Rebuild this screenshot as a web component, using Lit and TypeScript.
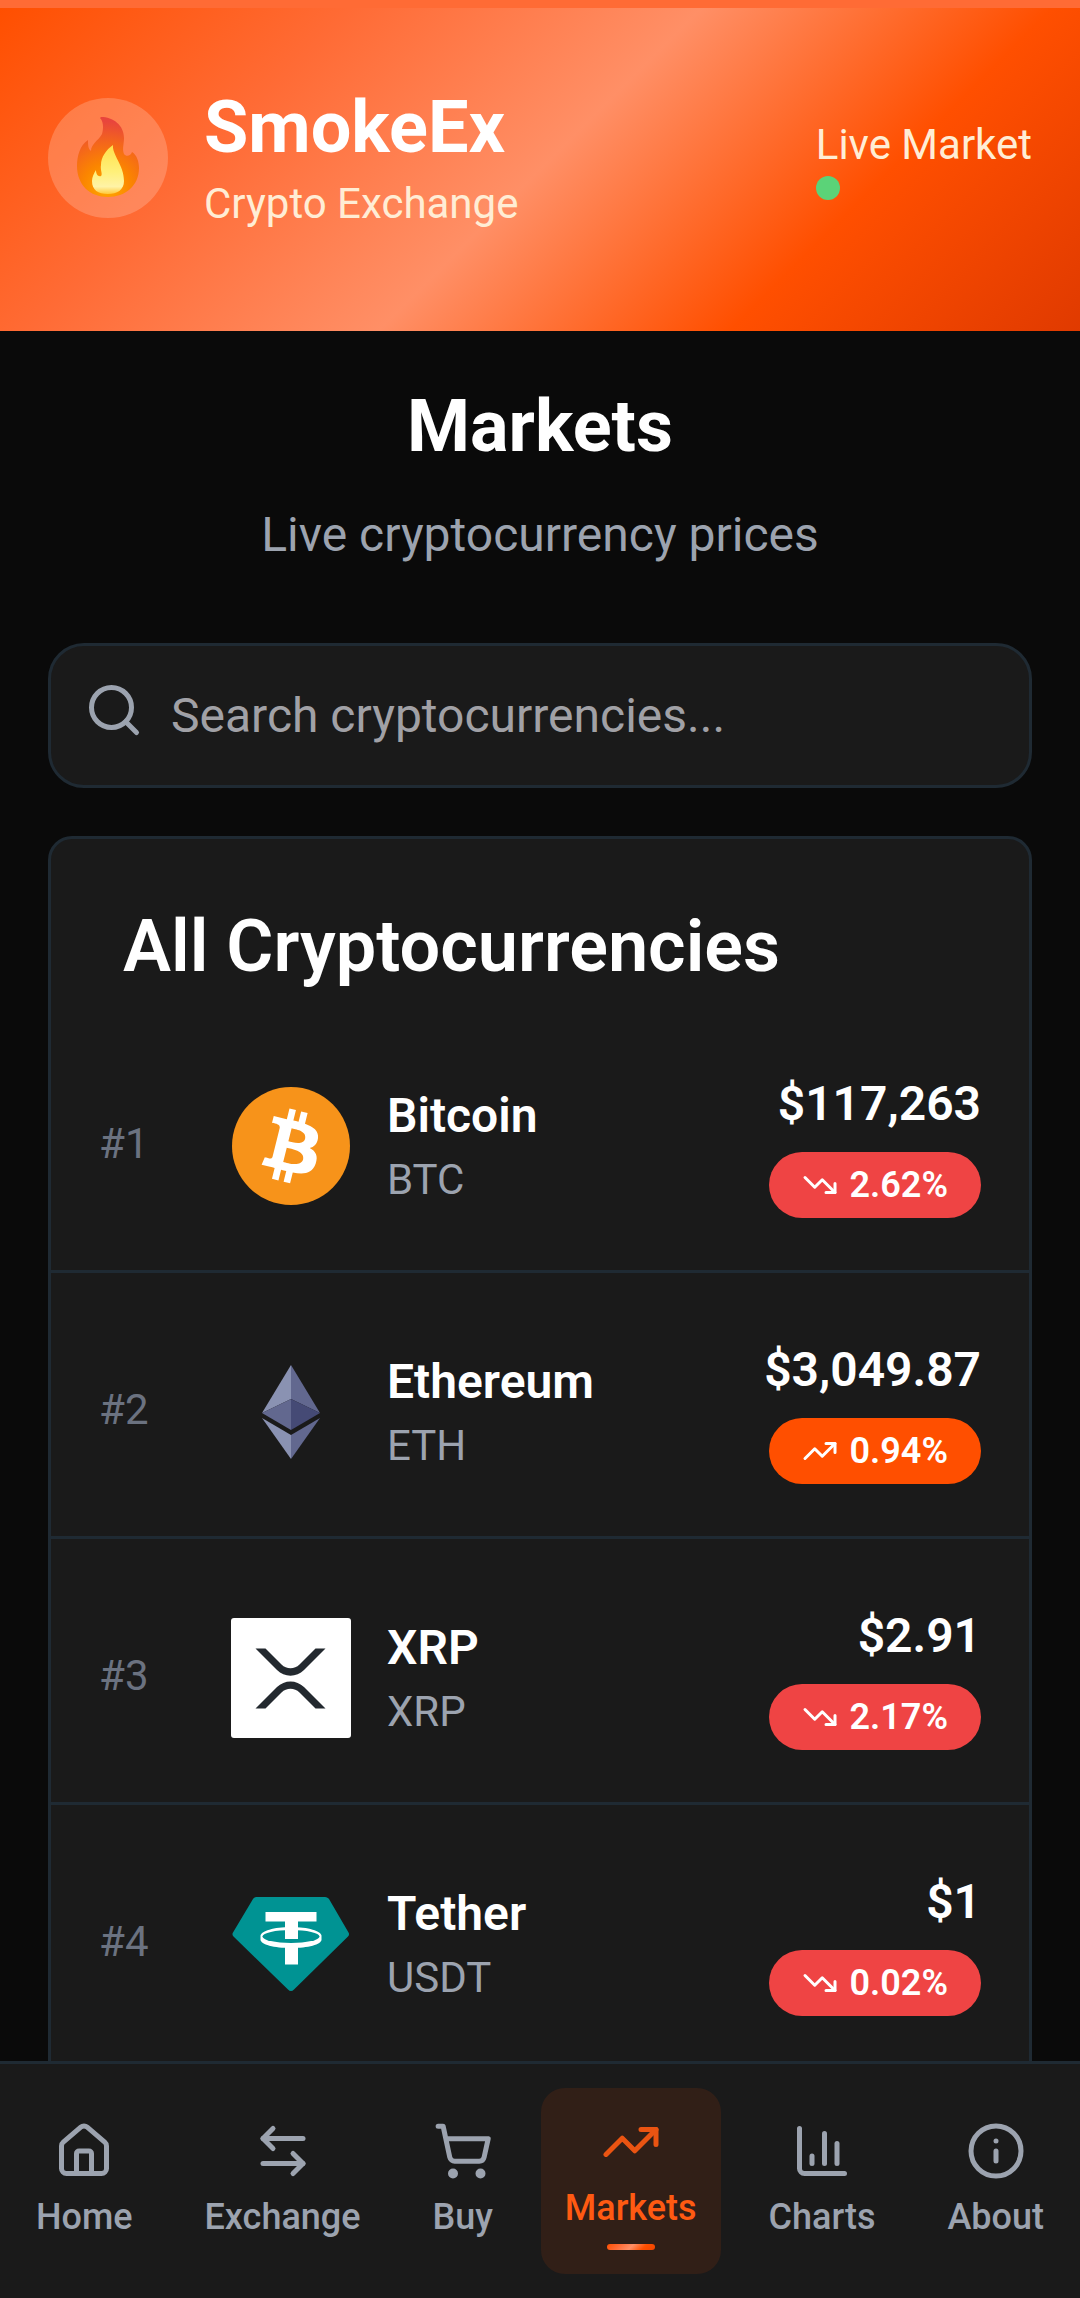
import { LitElement, html, css, svg, nothing } from "lit";
import type { SVGTemplateResult } from "lit";
import { customElement, property, state } from "lit/decorators.js";
import { classMap } from "lit/directives/class-map.js";

interface Coin {
  rank: number;
  name: string;
  symbol: string;
  price: string;
  change: number;
  logo: SVGTemplateResult;
}

interface Tab {
  id: string;
  label: string;
  icon: SVGTemplateResult;
}

const trendUp = svg`<path d="M16 7h6v6"/><path d="m22 7-8.5 8.5-5-5L2 17"/>`;
const trendDown = svg`<path d="M16 17h6v-6"/><path d="m22 17-8.5-8.5-5 5L2 7"/>`;

const bitcoinLogo = svg`
  <circle cx="60" cy="60" r="59" fill="#f7931a"/>
  <path transform="scale(3.75)" fill="#fff" d="M23.189 14.02c.314-2.096-1.283-3.223-3.465-3.975l.708-2.84-1.728-.43-.69 2.765c-.454-.114-.92-.22-1.385-.326l.695-2.783L15.596 6l-.708 2.839c-.376-.086-.746-.17-1.104-.26l.002-.009-2.384-.595-.46 1.846s1.283.294 1.256.312c.7.175.826.638.805 1.006l-.806 3.235c.048.012.11.03.18.057l-.183-.045-1.13 4.532c-.086.212-.303.531-.793.41.018.025-1.256-.313-1.256-.313l-.858 1.978 2.25.561c.418.105.828.215 1.231.318l-.715 2.872 1.727.43.708-2.84c.472.127.93.245 1.378.357l-.706 2.828 1.728.43.715-2.866c2.948.558 5.164.333 6.097-2.333.752-2.146-.037-3.385-1.588-4.192 1.13-.26 1.98-1.003 2.207-2.538zm-3.95 5.538c-.533 2.147-4.148.986-5.32.695l.95-3.805c1.172.293 4.929.872 4.37 3.11zm.535-5.569c-.487 1.953-3.495.96-4.47.717l.86-3.45c.975.243 4.118.696 3.61 2.733z"/>`;

const ethereumLogo = svg`
  <path fill="#8a92b2" d="M60 13 31 61l29-14z"/>
  <path fill="#62688f" d="M60 13v34l29 14z"/>
  <path fill="#62688f" d="M60 47 31 61l29 17z"/>
  <path fill="#454a75" d="M60 47v31l29-17z"/>
  <path fill="#8a92b2" d="m31 66 29 17v24z"/>
  <path fill="#62688f" d="M89 66 60 83v24z"/>`;

const xrpLogo = svg`
  <rect width="120" height="120" rx="3" fill="#fff"/>
  <path fill="#23292f" d="M24.5 30.5h10l16 16c5 5 13 5 18 0l16-16h10L73 52c-7.500 7.500-19.500 7.500-27 0z"/>
  <path fill="#23292f" d="M24.500 90.500h10l16-16c5-5 13-5 18 0l16 16h10L73 69c-7.500-7.500-19.500-7.500-27 0z"/>`;

const tetherLogo = svg`
  <path fill="#009393" d="M26 13h68c2 0 3 1 4 2l19.500 33.500c1 1.500 .5 3-.500 4L63 105.500c-2 2-4 2-6 0L2.500 52.500c-1-1-1.500-2.500-.500-4L22 15c1-1 2-2 4-2z"/>
  <path fill="#fff" d="M29.500 52c0-5 13.500-9 30.500-9s30.500 4 30.500 9v3.500c0 5-13.500 8.500-30.500 8.500s-30.500-3.500-30.500-8.500z"/>
  <ellipse cx="60" cy="52.500" rx="28.500" ry="6.500" fill="#009393"/>
  <path fill="#fff" d="M34.500 28h51v9.500H67V55H54V37.500H34.500zM54 62h13v18.500H54z"/>`;

const coins: Coin[] = [
  { rank: 1, name: "Bitcoin", symbol: "BTC", price: "$117,263", change: -2.62, logo: bitcoinLogo },
  { rank: 2, name: "Ethereum", symbol: "ETH", price: "$3,049.87", change: 0.94, logo: ethereumLogo },
  { rank: 3, name: "XRP", symbol: "XRP", price: "$2.91", change: -2.17, logo: xrpLogo },
  { rank: 4, name: "Tether", symbol: "USDT", price: "$1", change: -0.02, logo: tetherLogo },
];

const tabs: Tab[] = [
  {
    id: "home",
    label: "Home",
    icon: svg`<path d="M15 21v-8a1 1 0 0 0-1-1h-4a1 1 0 0 0-1 1v8"/><path d="M3 10a2 2 0 0 1 .709-1.528l7-6a2 2 0 0 1 2.582 0l7 6A2 2 0 0 1 21 10v9a2 2 0 0 1-2 2H5a2 2 0 0 1-2-2z"/>`,
  },
  {
    id: "exchange",
    label: "Exchange",
    icon: svg`<path d="M8 3 4 7l4 4"/><path d="M4 7h16"/><path d="m16 21 4-4-4-4"/><path d="M20 17H4"/>`,
  },
  {
    id: "buy",
    label: "Buy",
    icon: svg`<circle cx="8" cy="21" r="1"/><circle cx="19" cy="21" r="1"/><path d="M2.050 2.050h2l2.660 12.420a2 2 0 0 0 2 1.580h9.780a2 2 0 0 0 1.950-1.570l1.650-7.430H5.120"/>`,
  },
  { id: "markets", label: "Markets", icon: trendUp },
  {
    id: "charts",
    label: "Charts",
    icon: svg`<path d="M3 3v16a2 2 0 0 0 2 2h16"/><path d="M18 17V9"/><path d="M13 17V5"/><path d="M8 17v-3"/>`,
  },
  {
    id: "about",
    label: "About",
    icon: svg`<circle cx="12" cy="12" r="10"/><path d="M12 16v-4"/><path d="M12 8h.01"/>`,
  },
];

const strokeIcon = (shape: SVGTemplateResult, cls: string) => html`
  <svg class="${cls}" viewBox="0 0 24 24" fill="none" stroke="currentColor" stroke-width="2"
    stroke-linecap="round" stroke-linejoin="round" aria-hidden="true">${shape}</svg>`;

@customElement("app-header")
class AppHeader extends LitElement {
  static styles = css`
    :host {
      display: block;
      border-top: 8px solid #ff6b35;
      color: #fff;
    }
    .bar {
      display: flex;
      align-items: center;
      justify-content: space-between;
      padding: 72px 48px 95px;
      background: linear-gradient(135deg, #ff4f00 0%, #ff6b35 25%, #ff8f66 50%, #ff4f00 75%, #e03a00 100%);
    }
    .brand {
      display: flex;
      align-items: center;
      gap: 36px;
    }
    .badge {
      width: 120px;
      height: 120px;
      border-radius: 50%;
      background: rgba(255, 255, 255, 0.2);
    }
    .names {
      padding-bottom: 4px;
    }
    .name {
      font-size: 72px;
      line-height: 96px;
      font-weight: 700;
    }
    .small {
      margin: 0;
      font-size: 42px;
      line-height: 56px;
      color: #ffedd5;
    }
    .live {
      display: flex;
      flex-direction: column;
      gap: 3px;
    }
    .dot {
      width: 24px;
      height: 24px;
      border-radius: 50%;
      background: #5bd378;
    }
  `;

  render() {
    return html`
      <header class="bar">
        <div class="brand">
          <svg class="badge" viewBox="48 98 120 120" aria-hidden="true">
            <defs>
              <radialGradient id="flame" gradientUnits="userSpaceOnUse" cx="107" cy="188" r="70">
                <stop offset="0" stop-color="#ffa800"/>
                <stop offset="0.35" stop-color="#fb8500"/>
                <stop offset="0.65" stop-color="#f4661b"/>
                <stop offset="0.95" stop-color="#e8453c"/>
              </radialGradient>
              <linearGradient id="core" x1="0" y1="0" x2="0" y2="1">
                <stop offset="0" stop-color="#ffe04a"/>
                <stop offset="0.55" stop-color="#fff07a"/>
                <stop offset="0.85" stop-color="#fff3a6"/>
                <stop offset="1" stop-color="#ffc93c"/>
              </linearGradient>
            </defs>
            <path fill="url(#flame)" d="M101 117C113 117 124 125 124 138C124 144 122 149 124 154C126 157 131 156 132 152C137 155 139 162 139 168C139 186 125 197 108 197C90 197 77 185 77 166C77 156 80 145 88 140C88 144 88 149 91 151C91 144 98 141 102 134C104 127 103 121 100 118Z"/>
            <path fill="url(#core)" d="M113 145C112 155 124 165 124 181C124 190 117 194 108 194C98 194 92 190 92 181C92 177 94 173 96 170C96 174 98 177 101 176C103 174 100 170 101 165C101 157 106 150 113 145Z"/>
          </svg>
          <div class="names">
            <div class="name">SmokeEx</div>
            <p class="small">Crypto Exchange</p>
          </div>
        </div>
        <div class="live">
          <span class="small">Live Market</span>
          <span class="dot"></span>
        </div>
      </header>
    `;
  }
}

@customElement("coin-list")
class CoinList extends LitElement {
  @property({ attribute: false }) coins: Coin[] = [];

  static styles = css`
    :host {
      display: block;
      padding-bottom: 48px;
      border: 3px solid #1f2a33;
      border-radius: 24px;
      background: #1a1a1a;
      overflow: hidden;
    }
    .title {
      margin: 0;
      padding: 72px 72px 24px;
      font-size: 72px;
      line-height: 72px;
      font-weight: 600;
    }
    .rows {
      list-style: none;
      margin: 0;
      padding: 0;
    }
    .row {
      display: grid;
      grid-template-columns: 96px 120px 1fr auto;
      column-gap: 36px;
      align-items: center;
      padding: 61px 48px 50px;
      border-bottom: 3px solid #1f2a33;
    }
    .rank,
    .symbol {
      font-size: 42px;
      line-height: 56px;
    }
    .rank {
      color: #6b7280;
    }
    .symbol {
      color: #9ca3af;
    }
    .logo {
      display: block;
      width: 120px;
      height: 120px;
      padding-top: 4px;
    }
    .name,
    .price {
      font-size: 48px;
      line-height: 72px;
      font-weight: 600;
    }
    .quote {
      display: flex;
      flex-direction: column;
      align-items: flex-end;
      gap: 12px;
      padding-bottom: 2px;
    }
    .pill {
      display: flex;
      align-items: center;
      gap: 12px;
      padding: 9px 33px;
      border-radius: 33px;
      font-size: 36px;
      line-height: 48px;
      font-weight: 600;
      background: #ef4444;
    }
    .up {
      background: #ff4f00;
    }
    .arrow {
      width: 36px;
      height: 36px;
    }
  `;

  render() {
    return html`
      <h2 class="title">All Cryptocurrencies</h2>
      <ol class="rows">
        ${this.coins.map(
          (c) => html`
            <li class="row">
              <span class="rank">#${c.rank}</span>
              <svg class="logo" viewBox="0 0 120 120" aria-hidden="true">${c.logo}</svg>
              <div>
                <div class="name">${c.name}</div>
                <div class="symbol">${c.symbol}</div>
              </div>
              <div class="quote">
                <span class="price">${c.price}</span>
                <span class=${classMap({ pill: true, up: c.change > 0 })}>
                  ${strokeIcon(c.change > 0 ? trendUp : trendDown, "arrow")}
                  <span>${Math.abs(c.change).toFixed(2)}%</span>
                </span>
              </div>
            </li>
          `
        )}
      </ol>
    `;
  }
}

@customElement("tab-bar")
class TabBar extends LitElement {
  @property() active = "markets";

  static styles = css`
    :host {
      display: block;
      border-top: 3px solid #1f2a33;
      background: #1a1a1a;
    }
    .tabs {
      display: flex;
      align-items: center;
      justify-content: space-between;
      padding: 24px 12px;
    }
    .tab {
      display: flex;
      flex-direction: column;
      align-items: center;
      gap: 12px;
      padding: 24px;
      border-radius: 24px;
      color: #9ca3af;
      font-size: 36px;
      line-height: 48px;
      font-weight: 500;
      text-decoration: none;
    }
    .icon {
      width: 60px;
      height: 60px;
    }
    .active {
      color: #ff5a12;
      background: rgba(255, 79, 0, 0.1);
    }
    .active .icon {
      opacity: 0.9;
    }
    .mark {
      width: 48px;
      height: 6px;
      border-radius: 3px;
      background: linear-gradient(135deg, #ff4f00 0%, #ff6b35 25%, #ff8f66 50%, #ff4f00 75%, #f04400 100%);
    }
  `;

  private select(id: string, e: Event) {
    e.preventDefault();
    this.dispatchEvent(new CustomEvent("tab-change", { detail: id }));
  }

  render() {
    return html`
      <nav class="tabs">
        ${tabs.map((t) => {
          const on = t.id === this.active;
          return html`
            <a class=${classMap({ tab: true, active: on })} href="#${t.id}"
              aria-current=${on ? "page" : nothing}
              @click=${(e: Event) => this.select(t.id, e)}>
              ${strokeIcon(t.icon, "icon")}
              <span>${t.label}</span>
              ${on ? html`<span class="mark"></span>` : nothing}
            </a>
          `;
        })}
      </nav>
    `;
  }
}

@customElement("app-root")
class AppRoot extends LitElement {
  @state() private query = "";
  @state() private tab = "markets";

  static styles = css`
    :host {
      display: flex;
      flex-direction: column;
      height: 100vh;
      background: #0a0a0a;
      color: #fff;
      font-family: Roboto, "Liberation Sans", sans-serif;
    }
    .scroll {
      flex: 1;
      min-height: 0;
      overflow-y: auto;
      scrollbar-width: none;
    }
    .content {
      display: flex;
      flex-direction: column;
      gap: 48px;
      padding: 48px;
    }
    .intro {
      padding-bottom: 24px;
      text-align: center;
    }
    .heading {
      margin: 0 0 24px;
      font-size: 72px;
      line-height: 96px;
      font-weight: 700;
    }
    .lead {
      margin: 0;
      font-size: 48px;
      line-height: 72px;
      color: #9ca3af;
    }
    .search {
      display: flex;
      align-items: center;
      gap: 27px;
      padding: 0 33px;
      border: 3px solid #1f2a33;
      border-radius: 36px;
      background: #1a1a1a;
    }
    .glass {
      flex: none;
      width: 60px;
      height: 60px;
      padding-bottom: 12px;
      color: #9ca3af;
    }
    .field {
      flex: 1;
      min-width: 0;
      height: 139px;
      padding: 0;
      border: 0;
      outline: 0;
      background: none;
      color: #fff;
      font-family: inherit;
      font-size: 48px;
    }
    .field::placeholder {
      color: #a1a1a6;
    }
  `;

  render() {
    const q = this.query.trim().toLowerCase();
    const shown = coins.filter(
      (c) => c.name.toLowerCase().includes(q) || c.symbol.toLowerCase().includes(q)
    );
    return html`
      <app-header></app-header>
      <main class="scroll">
        <div class="content">
          <section class="intro">
            <h1 class="heading">Markets</h1>
            <p class="lead">Live cryptocurrency prices</p>
          </section>
          <label class="search">
            ${strokeIcon(svg`<circle cx="11" cy="11" r="8"/><path d="m21 21-4.300-4.300"/>`, "glass")}
            <input class="field" type="text" aria-label="Search cryptocurrencies"
              placeholder="Search cryptocurrencies..."
              .value=${this.query}
              @input=${(e: Event) => (this.query = (e.target as HTMLInputElement).value)} />
          </label>
          <coin-list .coins=${shown}></coin-list>
        </div>
      </main>
      <tab-bar .active=${this.tab} @tab-change=${(e: CustomEvent) => (this.tab = e.detail)}></tab-bar>
    `;
  }
}
